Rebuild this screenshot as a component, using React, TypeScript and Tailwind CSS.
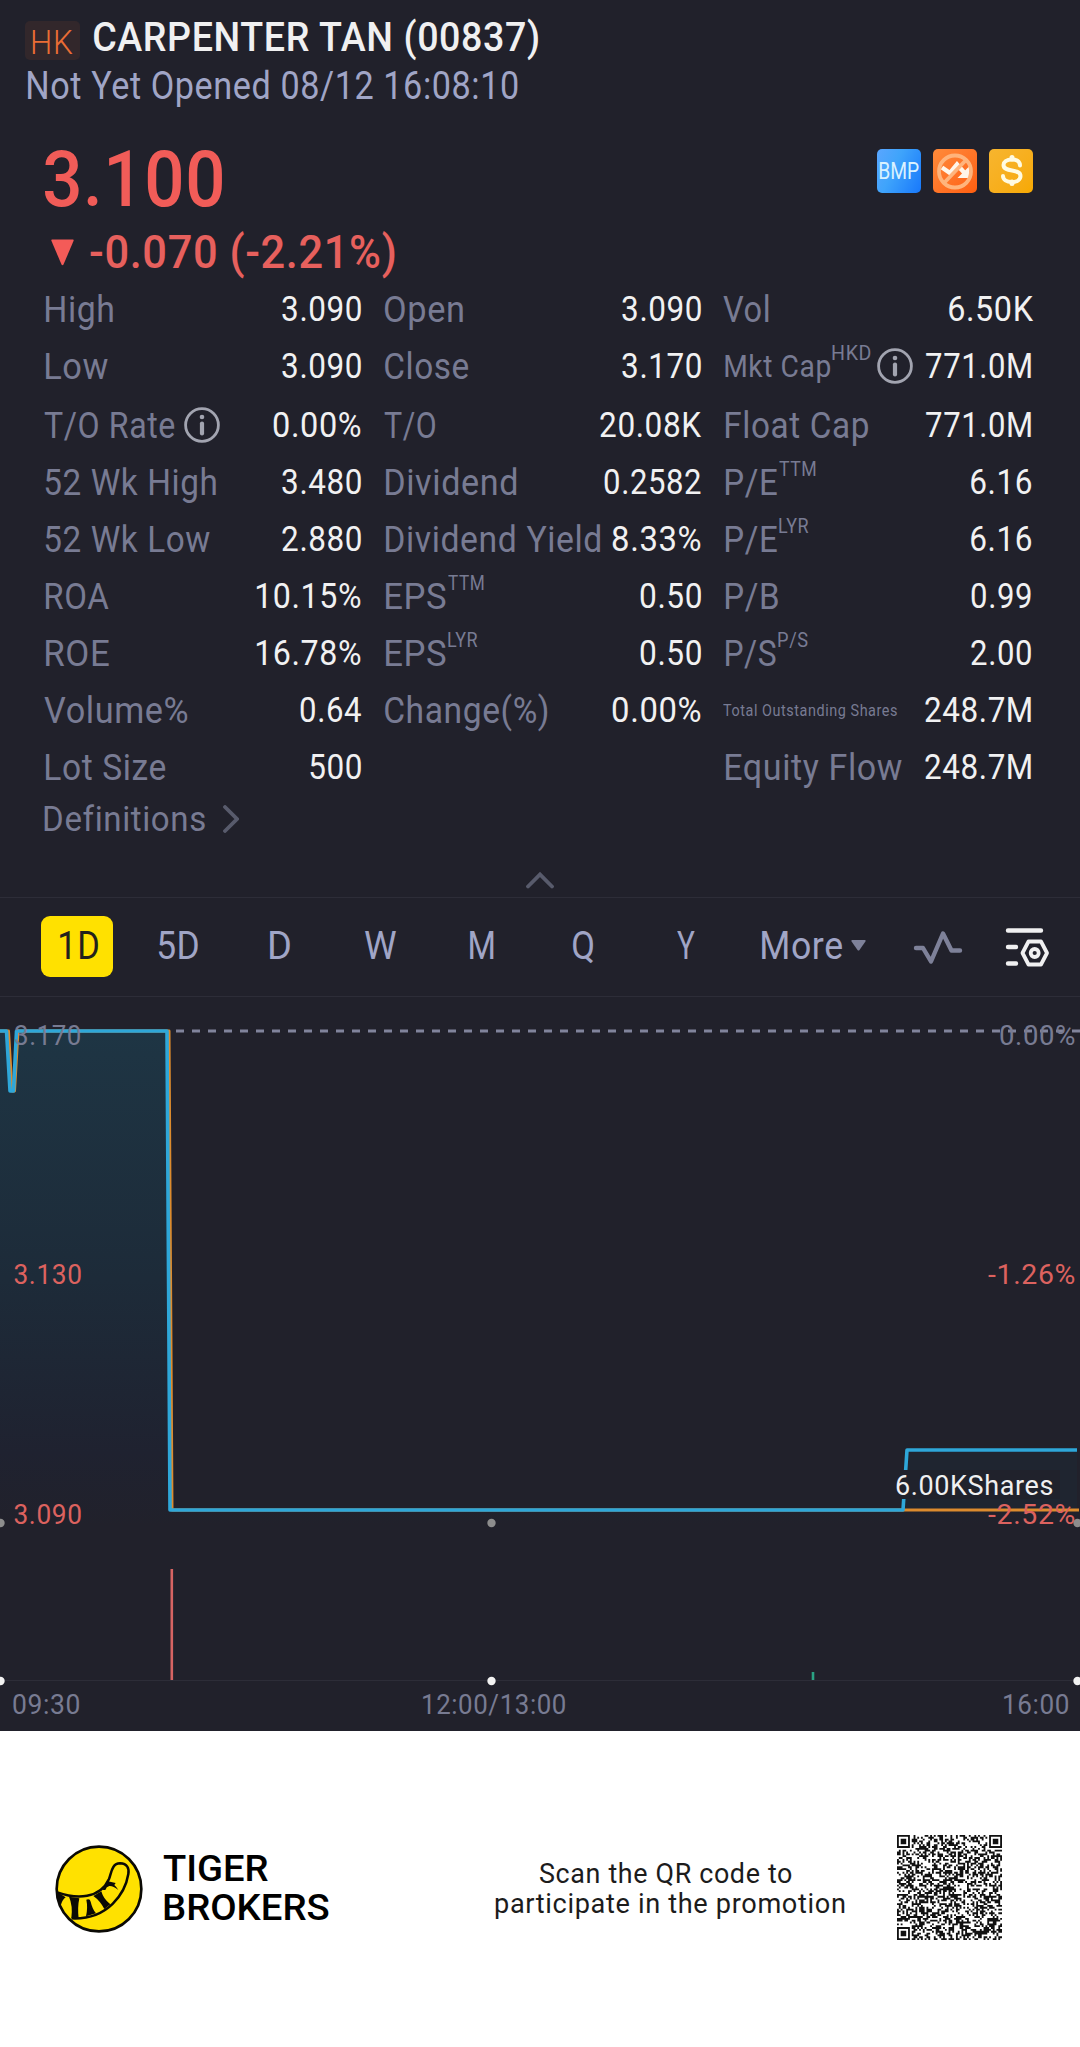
import { useLayoutEffect, useRef, useState } from "react";

type TextProps = {
    w: number;
    className?: string;
    children: string;
};

// Stretches a line of text so that its glyphs span exactly `w` pixels.
function Fit({ w, className = "", children }: TextProps) {
    const ref = useRef<HTMLSpanElement>(null);
    const [transform, setTransform] = useState("none");

    useLayoutEffect(() => {
        const ctx = document.createElement("canvas").getContext("2d");
        if (!ctx || !ref.current) return;
        const style = getComputedStyle(ref.current);
        ctx.font = `${style.fontWeight} ${style.fontSize} ${style.fontFamily}`;
        const spacing = parseFloat(style.letterSpacing) || 0;
        const box = ctx.measureText(children);
        const ink = box.actualBoundingBoxRight + box.actualBoundingBoxLeft + spacing * (children.length - 1);
        const scale = w / ink;
        setTransform(`translateX(${box.actualBoundingBoxLeft * scale}px) scaleX(${scale})`);
    }, [w, children]);

    return (
        <span className={`block shrink-0 ${className}`} style={{ width: w }}>
            <span ref={ref} className="inline-block origin-left whitespace-nowrap" style={{ transform }}>
                {children}
            </span>
        </span>
    );
}

function InfoIcon() {
    return (
        <svg className="h-9 w-9 shrink-0" viewBox="0 0 36 36" fill="none">
            <circle cx="18" cy="18" r="16.4" stroke="#a2a4b0" strokeWidth="2.8" />
            <circle cx="18" cy="10" r="2.3" fill="#a2a4b0" />
            <path d="M18 16.5V26.5" stroke="#a2a4b0" strokeWidth="4.2" strokeLinecap="round" />
        </svg>
    );
}

type Stat = {
    label: string;
    w: number;
    value: string;
    vw: number;
    pad?: number;
    sup?: string;
    supW?: number;
    info?: boolean;
    size?: string;
    inset?: boolean;
};

const rows: (Stat | null)[][] = [
    [
        { label: "High", w: 67, pad: 2, value: "3.090", vw: 79 },
        { label: "Open", w: 78, pad: 1, value: "3.090", vw: 79 },
        { label: "Vol", w: 46, value: "6.50K", vw: 84 },
    ],
    [
        { label: "Low", w: 62, pad: 2, value: "3.090", vw: 79 },
        { label: "Close", w: 84, pad: 1, value: "3.170", vw: 79 },
        { label: "Mkt Cap", w: 105, pad: 2, value: "771.0M", vw: 105, sup: "HKD", supW: 39, info: true, size: "text-[31px]", inset: true },
    ],
    [
        { label: "T/O Rate", w: 131, value: "0.00%", vw: 88, info: true },
        { label: "T/O", w: 51, value: "20.08K", vw: 101 },
        { label: "Float Cap", w: 142, pad: 3, value: "771.0M", vw: 105, inset: true },
    ],
    [
        { label: "52 Wk High", w: 171, pad: 1, value: "3.480", vw: 79 },
        { label: "Dividend", w: 130, pad: 2, value: "0.2582", vw: 97 },
        { label: "P/E", w: 51, pad: 3, value: "6.16", vw: 60, sup: "TTM", supW: 37, inset: true },
    ],
    [
        { label: "52 Wk Low", w: 165, pad: 1, value: "2.880", vw: 79 },
        { label: "Dividend Yield", w: 214, pad: 2, value: "8.33%", vw: 89 },
        { label: "P/E", w: 51, pad: 3, value: "6.16", vw: 60, sup: "LYR", supW: 30, inset: true },
    ],
    [
        { label: "ROA", w: 63, pad: 2, value: "10.15%", vw: 105 },
        { label: "EPS", w: 60, pad: 2, value: "0.50", vw: 61, sup: "TTM", supW: 36 },
        { label: "P/B", w: 52, pad: 3, value: "0.99", vw: 60, inset: true },
    ],
    [
        { label: "ROE", w: 63, pad: 2, value: "16.78%", vw: 105 },
        { label: "EPS", w: 60, pad: 2, value: "0.50", vw: 61, sup: "LYR", supW: 30 },
        { label: "P/S", w: 50, pad: 3, value: "2.00", vw: 60, sup: "P/S", supW: 30, inset: true },
    ],
    [
        { label: "Volume%", w: 144, value: "0.64", vw: 61 },
        { label: "Change(%)", w: 163, pad: 1, value: "0.00%", vw: 89 },
        { label: "Total Outstanding Shares", w: 174, value: "248.7M", vw: 106, size: "text-[16.5px]", inset: true },
    ],
    [
        { label: "Lot Size", w: 120, pad: 2, value: "500", vw: 51 },
        null,
        { label: "Equity Flow", w: 176, pad: 3, value: "248.7M", vw: 106, inset: true },
    ],
];

function StatCell({ stat }: { stat: Stat | null }) {
    if (!stat) return <div />;
    return (
        <div className="flex items-start justify-between">
            <div className="flex items-start text-[#787b93]" style={{ paddingLeft: stat.pad ?? 0 }}>
                <Fit w={stat.w} className={stat.size ?? "text-[36.5px]"}>{stat.label}</Fit>
                {stat.sup && (
                    <Fit w={stat.supW ?? 30} className="ml-[2px] text-[20.5px] leading-[30px]">{stat.sup}</Fit>
                )}
                {stat.info && (
                    <div className={stat.sup ? "ml-[6px] mt-[10px]" : "ml-[9px] mt-[10px]"}>
                        <InfoIcon />
                    </div>
                )}
            </div>
            <Fit w={stat.vw} className={`text-[35px] text-[#f1f1f2] ${stat.inset ? "mr-[2px]" : ""}`}>{stat.value}</Fit>
        </div>
    );
}

function Badges() {
    return (
        <div className="flex gap-3 pt-[1px]">
            <div className="flex h-11 w-11 items-center justify-center rounded-[5px] bg-[linear-gradient(115deg,#5aa6ff_0%,#3fa4fb_40%,#1878fb_100%)]">
                <Fit w={40} className="text-[24px] leading-none tracking-normal text-[#d9f1ff]">BMP</Fit>
            </div>
            <svg className="h-11 w-11 rounded-[5px] bg-linear-to-br from-[#ff8a3a] to-[#ff5e0e]" viewBox="0 0 44 44" fill="none">
                <path d="M9 18.5L17 24L24 15.5L32 24.5" stroke="#fff6ea" strokeWidth="4.5" />
                <path d="M36 17.500V29H24.500Z" fill="#fff6ea" />
                <path d="M33 11L11 34" stroke="#ffb47c" strokeWidth="3.8" />
                <circle cx="22" cy="22.5" r="16" stroke="#ffb47c" strokeWidth="3.8" />
            </svg>
            <svg className="h-11 w-11 rounded-[5px] bg-linear-to-br from-[#f7b52e] to-[#f7a900]" viewBox="0 0 44 44" fill="none">
                <path d="M31 16.5C31 12.500 27.500 10.500 23 10.500C17.500 10.500 14.500 13 14.500 16C14.500 24 31.500 19 31.500 27C31.500 30.500 28 33 23 33C17.500 33 14 30.500 14 27" stroke="#fffbe2" strokeWidth="4" strokeLinecap="round" />
                <path d="M23 8.500V10M23 33V34.500" stroke="#fffbe2" strokeWidth="5" strokeLinecap="round" />
            </svg>
        </div>
    );
}

function Header() {
    return (
        <header className="h-[112px] pl-[25px]">
            <div className="flex h-[61px] items-start">
                <div className="mt-[21px] flex h-[39px] w-[55px] justify-center rounded-[5px] bg-[#32272b]">
                    <Fit w={41} className="text-[33px] leading-[43px] font-light text-[#ea6d35]">HK</Fit>
                </div>
                <Fit w={445} className="ml-[14px] pt-[8px] text-[40.5px] leading-[58px] font-medium text-[#f0f0f1]">CARPENTER TAN (00837)</Fit>
            </div>
            <Fit w={490} className="ml-[3px] text-[38px] leading-[50px] text-[#a0a5c6]">Not Yet Opened 08/12 16:08:10</Fit>
        </header>
    );
}

function Quote() {
    return (
        <section className="px-[44px] pt-9">
            <div className="flex h-[76px] items-start justify-between pr-[3px]">
                <Fit w={178} className="text-[77px] leading-[64px] font-medium text-[#f15c58]">3.100</Fit>
                <Badges />
            </div>
            <div className="flex h-[57px] items-center">
                <svg className="ml-[7px] h-[27px] w-[23px]" viewBox="0 0 23 27">
                    <path d="M1 .5H22Q23 .5 22.500 2L12.500 25.500Q11.500 27 10.500 25.500L.5 2Q0 .5 1 .5Z" fill="#f45b58" />
                </svg>
                <Fit w={305} className="ml-[16px] text-[45.5px] leading-[52px] font-medium text-[#e7605d]">-0.070 (-2.21%)</Fit>
            </div>
            <div className="leading-[58px]">
                {rows.map((row, i) => (
                    <div
                        key={i}
                        className={`grid grid-cols-[317px_317px_310px] gap-x-[22.5px] ${i === 1 ? "h-[59px]" : "h-[57px]"}`}
                    >
                        {row.map((stat, j) => <StatCell key={j} stat={stat} />)}
                    </div>
                ))}
            </div>
            <div className="flex h-[46px] items-start">
                <Fit w={160} className="text-[35px] leading-[48px] text-[#787b93]">Definitions</Fit>
                <svg className="mt-[9px] ml-[19px] h-7 w-4" viewBox="0 0 16 28" fill="none">
                    <path d="M2 2L14 14L2 26" stroke="#585b6c" strokeWidth="3.8" strokeLinecap="round" />
                </svg>
            </div>
            <div className="flex h-[55px] items-end justify-center pb-[8px]">
                <svg className="h-[18px] w-7" viewBox="0 0 28 18" fill="none">
                    <path d="M2 15.500L14 3.500L26 15.500" stroke="#585b6c" strokeWidth="3.8" strokeLinecap="round" />
                </svg>
            </div>
        </section>
    );
}

const tabs = [
    { name: "5D", w: 40, cell: "w-[46px] ml-[42px]" },
    { name: "D", w: 20, cell: "w-[46px] ml-[56px]" },
    { name: "W", w: 31, cell: "w-[46px] ml-[54px]" },
    { name: "M", w: 24, cell: "w-[46px] ml-[56px]" },
    { name: "Q", w: 20, cell: "w-[46px] ml-[55px]" },
    { name: "Y", w: 18, cell: "w-[46px] ml-[57px]" },
];

function Tabs() {
    return (
        <nav className="flex h-[100px] items-start border-y border-[#2d2d38] pt-[18px] pl-[41px] text-[38px] leading-[61px] text-[#a0a5c6]">
            <button className="flex h-[61px] w-[72px] justify-center rounded-[9px] bg-[#ffe100] pl-1 text-[#22211c]">
                <Fit w={38}>1D</Fit>
            </button>
            {tabs.map((tab) => (
                <button key={tab.name} className={`flex justify-center ${tab.cell}`}>
                    <Fit w={tab.w}>{tab.name}</Fit>
                </button>
            ))}
            <button className="ml-[53px] flex items-start">
                <Fit w={80}>More</Fit>
                <svg className="mt-[24px] ml-[9px] h-[11px] w-[15px]" viewBox="0 0 15 11">
                    <path d="M1 0H14Q15 .3 14.400 1.500L8.500 10Q7.500 11.200 6.500 10L.6 1.500Q0 .3 1 0Z" fill="#7e8199" />
                </svg>
            </button>
            <svg className="mt-[14px] ml-[47px] h-[36px] w-[50px]" viewBox="0 0 50 36" fill="none">
                <path d="M3 18H10L18 31.500L30 3.500L38.500 20.500H47" stroke="#7e8199" strokeWidth="4.400" strokeLinecap="round" strokeLinejoin="round" />
            </svg>
            <svg className="mt-[11px] ml-[42px] h-[41px] w-[45px]" viewBox="0 0 45 41" fill="none" stroke="#f0f0f1" strokeWidth="4.400" strokeLinecap="round" strokeLinejoin="round">
                <path d="M3 3.500H36M3 20H11M3 36.500H11" />
                <path d="M23.500 14.500H36L42 26L36 37.500H23.500L17.500 26Z" strokeWidth="3.800" />
                <circle cx="29.700" cy="26" r="4" strokeWidth="3.800" />
            </svg>
        </nav>
    );
}

const bluePath = "M0 34H6.500L10 94H13.500L16.500 34H167L170 513H903L907 453H1077";

function Chart() {
    return (
        <svg className="block h-[734px] w-[1080px] text-[28px]" viewBox="0 0 1080 734" fill="none">
            <defs>
                <linearGradient id="area" gradientUnits="userSpaceOnUse" x1="0" y1="34" x2="0" y2="529">
                    <stop offset="0" stopColor="#1e3544" />
                    <stop offset="0.5" stopColor="#1d2b39" />
                    <stop offset="0.85" stopColor="#1f2230" />
                    <stop offset="1" stopColor="#21212b" />
                </linearGradient>
            </defs>
            <path d={`${bluePath}V529H0Z`} fill="url(#area)" />
            <path d="M907 455H1077V511H903Z" fill="#1f2530" />
            <path d="M0 34H8.500L12 94H14.500L18 34H169L172 513H1079" stroke="#dc8b2e" strokeWidth="3" strokeLinejoin="round" />
            <path d={bluePath} stroke="#2ea7d9" strokeWidth="3.600" strokeLinejoin="round" />
            <path d="M176 34H1080" stroke="#81849c" strokeWidth="3.200" strokeDasharray="8 8" />
            <path d="M890 473H1060V502H890Z" fill="#20222c" />

            <g fill="#787b92">
                <text x="14" y="48" textLength="68" lengthAdjust="spacingAndGlyphs">3.170</text>
                <text x="999" y="48" textLength="77" lengthAdjust="spacingAndGlyphs">0.00%</text>
                <text x="12" y="717" textLength="69" lengthAdjust="spacingAndGlyphs">09:30</text>
                <text x="421" y="717" textLength="146" lengthAdjust="spacingAndGlyphs">12:00/13:00</text>
                <text x="1002" y="717" textLength="68" lengthAdjust="spacingAndGlyphs">16:00</text>
            </g>
            <g fill="#dc625f">
                <text x="13.500" y="287" textLength="69" lengthAdjust="spacingAndGlyphs">3.130</text>
                <text x="13.500" y="527" textLength="69" lengthAdjust="spacingAndGlyphs">3.090</text>
                <text x="988" y="287" textLength="88" lengthAdjust="spacingAndGlyphs">-1.26%</text>
                <text x="988" y="527" textLength="88" lengthAdjust="spacingAndGlyphs">-2.52%</text>
            </g>
            <text x="895" y="498" fill="#f0f0f1" textLength="159" lengthAdjust="spacingAndGlyphs">6.00KShares</text>

            <path d="M0 683.500H1080" stroke="#2d2d38" />
            <path d="M171.800 572V683" stroke="#d66463" strokeWidth="2.600" />
            <path d="M813 675V683" stroke="#2aa283" strokeWidth="2.600" />
            <g fill="#8d8d8d">
                <circle cx=".5" cy="526" r="4.200" />
                <circle cx="491.500" cy="526" r="4.200" />
                <circle cx="1077.500" cy="526" r="4.200" />
            </g>
            <g fill="#f2f2f2">
                <circle cx=".5" cy="684" r="4.200" />
                <circle cx="491.500" cy="684" r="4.200" />
                <circle cx="1077.500" cy="684" r="4.200" />
            </g>
        </svg>
    );
}

const QR_SIZE = 57;

function qrPath() {
    let seed = 837;
    let d = "";
    const spots = [[0, 0], [QR_SIZE - 7, 0], [0, QR_SIZE - 7]];
    for (let y = 0; y < QR_SIZE; y++) {
        for (let x = 0; x < QR_SIZE; x++) {
            seed = (seed * 1103515245 + 12345) % 2147483648;
            let on = seed / 2147483648 > 0.5;
            for (const [fx, fy] of spots) {
                const r = Math.max(Math.abs(x - fx - 3), Math.abs(y - fy - 3));
                if (r <= 4) on = r === 3 || r <= 1;
            }
            if (on) d += `M${x} ${y}h1v1h-1z`;
        }
    }
    return d;
}

function TigerLogo() {
    return (
        <svg className="h-[88px] w-[88px]" viewBox="45 43 264 264" fill="none" stroke="#0b0a05">
            <circle cx="177" cy="175" r="127" fill="#ffe100" strokeWidth="8" />
            <path d="M52 185C110 206 180 205 207 145C214 128 215 98 240 98C262 99 268 113 265 130C256 186 205 268 95 263" strokeWidth="7.500" strokeLinejoin="round" />
            <g fill="#0b0a05" stroke="none">
                <path d="M50 183L77 200Q66 208 62 226L53 210Z" />
                <path d="M87 198L118 203Q112 230 116 264L94 263Q99 225 87 198Z" />
                <path d="M139 207Q150 203 152 213Q157 235 168 248L138 257Q144 230 139 207Z" />
                <path d="M160 196L184 182Q190 205 211 221L193 235Q180 210 160 196Z" />
                <path d="M188 178L204 152Q218 156 227 157L223 163Q230 169 235 178Q219 165 208 166Q199 168 196 178Z" />
            </g>
        </svg>
    );
}

function Footer() {
    return (
        <footer className="flex h-[316px] items-start bg-white pt-[104px] pl-[55px] text-black">
            <div className="pt-[9.500px]">
                <TigerLogo />
            </div>
            <div className="ml-5 pt-[14px] text-[37.5px] leading-[39px] font-medium tracking-normal">
                <Fit w={105}>TIGER</Fit>
                <Fit w={165} className="ml-[1px]">BROKERS</Fit>
            </div>
            <div className="ml-[166px] w-[351px] pt-[25px] text-[27px] leading-[29.500px] text-[#1c1c1c]">
                <Fit w={252} className="ml-[45px]">Scan the QR code to</Fit>
                <Fit w={350}>participate in the promotion</Fit>
            </div>
            <svg className="ml-[51px] h-[105px] w-[105px]" viewBox={`0 0 ${QR_SIZE} ${QR_SIZE}`}>
                <path d={qrPath()} fill="#111" />
            </svg>
        </footer>
    );
}

export default function App() {
    return (
        <div className="w-[1080px] overflow-hidden bg-[#21212b] font-['Roboto',sans-serif] font-normal tracking-[0.04em]">
            <Header />
            <Quote />
            <Tabs />
            <Chart />
            <Footer />
        </div>
    );
}
